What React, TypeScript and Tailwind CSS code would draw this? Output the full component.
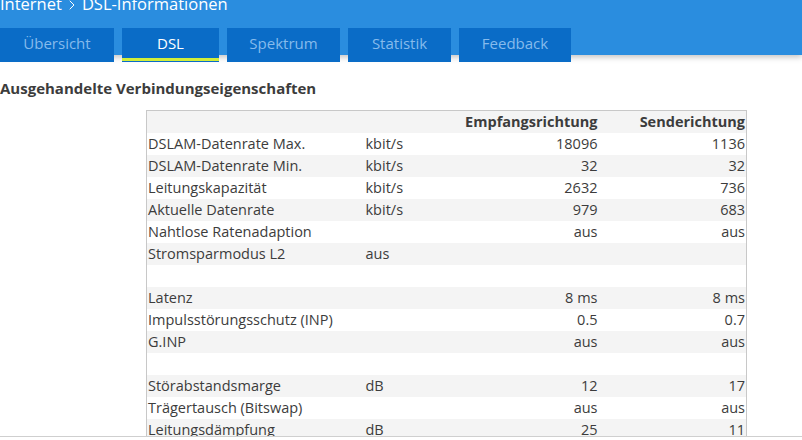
import React from "react";
import { ChevronRight } from "lucide-react";

type Row = { label: string; unit?: string; down?: string; up?: string } | null;

const tabs = [
  { name: "Übersicht", w: "w-[114px]" },
  { name: "DSL", w: "w-[97px]", active: true },
  { name: "Spektrum", w: "w-[113px]" },
  { name: "Statistik", w: "w-[103px]" },
  { name: "Feedback", w: "w-[112px]" },
];

const rows: Row[] = [
  { label: "DSLAM-Datenrate Max.", unit: "kbit/s", down: "18096", up: "1136" },
  { label: "DSLAM-Datenrate Min.", unit: "kbit/s", down: "32", up: "32" },
  { label: "Leitungskapazität", unit: "kbit/s", down: "2632", up: "736" },
  { label: "Aktuelle Datenrate", unit: "kbit/s", down: "979", up: "683" },
  { label: "Nahtlose Ratenadaption", down: "aus", up: "aus" },
  { label: "Stromsparmodus L2", unit: "aus" },
  null,
  { label: "Latenz", down: "8 ms", up: "8 ms" },
  { label: "Impulsstörungsschutz (INP)", down: "0.5", up: "0.7" },
  { label: "G.INP", down: "aus", up: "aus" },
  null,
  { label: "Störabstandsmarge", unit: "dB", down: "12", up: "17" },
  { label: "Trägertausch (Bitswap)", down: "aus", up: "aus" },
  { label: "Leitungsdämpfung", unit: "dB", down: "25", up: "11" },
];

export default function App() {
  return (
    <div className="relative h-[440px] w-[802px] overflow-hidden bg-white font-['Open_Sans',sans-serif] text-[#3c3c3c]">
      {/* header */}
      <header className="relative z-10 h-[62px] bg-[#2a8ddf] shadow-[0_2px_6px_rgba(0,0,0,0.25)]">
        <div className="-mt-[7px] flex h-[35px] items-start text-[16.5px] leading-[22px] text-white">
          <span>Internet</span>
          <ChevronRight size={16} strokeWidth={1.5} className="mx-[2px] mt-[4px]" />
          <span>DSL-Informationen</span>
        </div>
        <nav className="flex gap-[8px]">
          {tabs.map((t) => (
            <div
              key={t.name}
              className={`relative flex h-[34px] items-center justify-center bg-[#0a6cc7] pb-[4px] text-[15px] ${t.w} ${
                t.active ? "text-white" : "text-[#86bbec]"
              }`}
            >
              {t.name}
              {t.active && (
                <span className="absolute bottom-[1px] left-0 right-0 h-[3px] bg-[#d2ee3a]" />
              )}
            </div>
          ))}
        </nav>
      </header>

      <h2 className="mt-[18px] pt-[4px] text-[15px] font-bold leading-[22px]">
        Ausgehandelte Verbindungseigenschaften
      </h2>

      <table className="ml-[146px] mt-[11px] w-[601px] table-fixed border-collapse border border-[#c8c8c8] text-[14.5px] leading-[22px]">
        <colgroup>
          <col className="w-[219px]" />
          <col className="w-[94px]" />
          <col className="w-[140px]" />
          <col className="w-[147px]" />
        </colgroup>
        <thead>
          <tr className="h-[22px] bg-[#f4f4f4] font-bold">
            <th />
            <th />
            <th className="pr-[2px] text-right">Empfangsrichtung</th>
            <th className="pr-[1px] text-right">Senderichtung</th>
          </tr>
        </thead>
        <tbody>
          {rows.map((r, i) => (
            <tr key={i} className={`h-[22px] ${i % 2 === 1 ? "bg-[#f4f4f4]" : "bg-white"}`}>
              <td className="pl-[1px] whitespace-nowrap">{r?.label}</td>
              <td>{r?.unit}</td>
              <td className="pr-[2px] text-right">{r?.down}</td>
              <td className="pr-[1px] text-right">{r?.up}</td>
            </tr>
          ))}
        </tbody>
      </table>

      <div className="absolute bottom-0 left-0 right-0 z-10 h-[4px] border-t border-[#cfcfcf] bg-white" />
    </div>
  );
}
